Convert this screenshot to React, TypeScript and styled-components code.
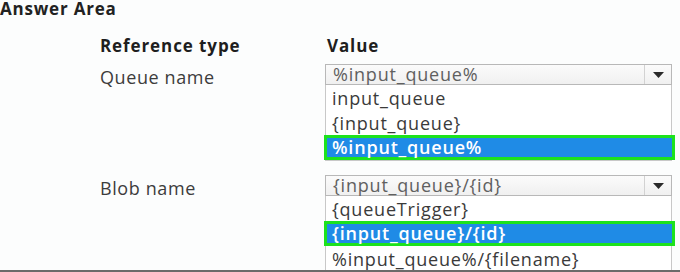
import styled, { createGlobalStyle } from 'styled-components';

const GlobalStyle = createGlobalStyle`
  html, body {
    margin: 0;
    padding: 0;
    background: #fff;
  }
  body {
    font-family: 'Open Sans', 'Liberation Sans', sans-serif;
  }
`;

const Page = styled.main`
  width: 680px;
  height: 272px;
  box-sizing: border-box;
  overflow: hidden;
  background: #fcfdfd;
  border-bottom: 2px solid #6a6a6a;
`;

const Title = styled.h1`
  margin: 0;
  padding-left: 0;
  height: 20px;
  font-size: 17px;
  line-height: 18px;
  font-weight: 700;
  color: #222;
  letter-spacing: 0.8px;
`;

const Table = styled.section`
  display: grid;
  grid-template-columns: 225px 350px;
  padding-left: 100px;
  margin-top: 16px;
`;

const HeadCell = styled.div<{ $indent?: number }>`
  font-size: 17px;
  line-height: 20px;
  font-weight: 700;
  color: #1e1e1e;
  height: 28px;
  letter-spacing: 0.9px;
  padding-left: ${(p) => p.$indent ?? 0}px;
`;

const Label = styled.div`
  font-size: 18px;
  line-height: 22px;
  color: #3c3c3c;
  padding-top: 2px;
  letter-spacing: 0.6px;
`;

const Dropdown = styled.div<{ $gap?: number }>`
  display: flex;
  flex-direction: column;
  margin-bottom: ${(p) => p.$gap ?? 0}px;
`;

const Select = styled.div`
  height: 21px;
  display: flex;
  align-items: stretch;
  border: 1px solid #b8b8b8;
  background: linear-gradient(#fbfbfb, #f0f0f0);
  box-sizing: border-box;
  width: 347px;
`;

const SelectValue = styled.span`
  flex: 1;
  padding-left: 7px;
  font-size: 18px;
  line-height: 19px;
  letter-spacing: 0.8px;
  color: #606060;
  white-space: nowrap;
`;

const ArrowBox = styled.span`
  width: 26px;
  border-left: 1px solid #d2d2d2;
  display: flex;
  align-items: center;
  justify-content: center;
`;

const List = styled.ul`
  list-style: none;
  margin: 0;
  padding: 0;
  width: 347px;
  border: 1px solid #c8c8c8;
  border-top: none;
  box-sizing: border-box;
  background: #fff;
`;

const Option = styled.li<{ $selected?: boolean }>`
  height: 25px;
  box-sizing: border-box;
  padding-left: ${(p) => (p.$selected ? 5 : 6)}px;
  padding-top: ${(p) => (p.$selected ? 0 : 2)}px;
  font-size: 18px;
  letter-spacing: 0.8px;
  white-space: nowrap;
  font-weight: ${(p) => (p.$selected ? 600 : 400)};
  line-height: ${(p) => (p.$selected ? 19 : 23)}px;
  color: ${(p) => (p.$selected ? '#fff' : '#3a3a3a')};
  background: ${(p) => (p.$selected ? '#1f8be6' : 'transparent')};
  border: ${(p) => (p.$selected ? '3px solid #1de21d' : 'none')};
  margin: ${(p) => (p.$selected ? '0 -4px 0 -2px' : '0')};
`;

const Arrow = () => (
  <svg width="11" height="6" viewBox="0 0 11 6">
    <path d="M0 0 H11 L5.5 6 Z" fill="#2a2a2a" />
  </svg>
);

type Question = {
  label: string;
  value: string;
  options: string[];
  selected: number;
  gap: number;
};

const questions: Question[] = [
  {
    label: 'Queue name',
    value: '%input_queue%',
    options: ['input_queue', '{input_queue}', '%input_queue%'],
    selected: 2,
    gap: 14,
  },
  {
    label: 'Blob name',
    value: '{input_queue}/{id}',
    options: ['{queueTrigger}', '{input_queue}/{id}', '%input_queue%/{filename}'],
    selected: 1,
    gap: 0,
  },
];

export default function App() {
  return (
    <>
      <GlobalStyle />
      <Page>
        <Title>Answer Area</Title>
        <Table>
          <HeadCell>Reference type</HeadCell>
          <HeadCell $indent={2}>Value</HeadCell>
          {questions.map((q) => [
            <Label key={q.label + '-l'}>{q.label}</Label>,
            <Dropdown key={q.label + '-d'} $gap={q.gap}>
              <Select>
                <SelectValue>{q.value}</SelectValue>
                <ArrowBox>
                  <Arrow />
                </ArrowBox>
              </Select>
              <List>
                {q.options.map((o, i) => (
                  <Option key={o} $selected={i === q.selected}>
                    {o}
                  </Option>
                ))}
              </List>
            </Dropdown>,
          ])}
        </Table>
      </Page>
    </>
  );
}
